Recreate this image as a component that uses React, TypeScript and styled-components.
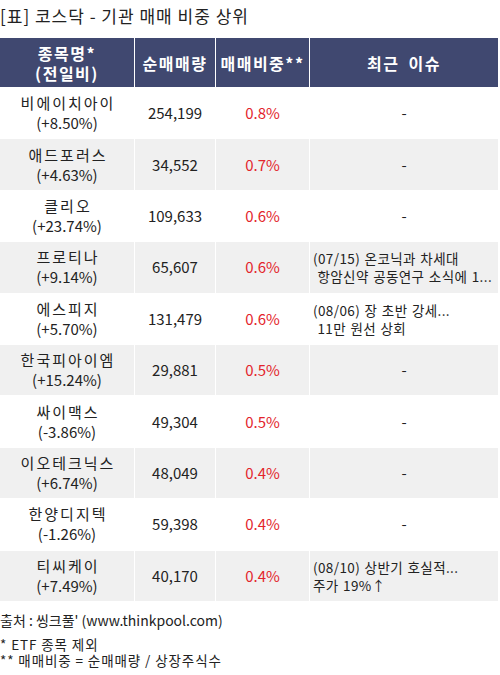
import { styled, createGlobalStyle } from 'styled-components';

interface IRow {
  name: string;
  change: string;
  volume: string;
  ratio: string;
  issue?: string[];
}

const rows: IRow[] = [
  { name: '비에이치아이', change: '(+8.50%)', volume: '254,199', ratio: '0.8%' },
  { name: '애드포러스', change: '(+4.63%)', volume: '34,552', ratio: '0.7%' },
  { name: '클리오', change: '(+23.74%)', volume: '109,633', ratio: '0.6%' },
  {
    name: '프로티나',
    change: '(+9.14%)',
    volume: '65,607',
    ratio: '0.6%',
    issue: ['(07/15) 온코닉과 차세대', ' 항암신약 공동연구 소식에 1...'],
  },
  {
    name: '에스피지',
    change: '(+5.70%)',
    volume: '131,479',
    ratio: '0.6%',
    issue: ['(08/06) 장 초반 강세...', ' 11만 원선 상회'],
  },
  { name: '한국피아이엠', change: '(+15.24%)', volume: '29,881', ratio: '0.5%' },
  { name: '싸이맥스', change: '(-3.86%)', volume: '49,304', ratio: '0.5%' },
  { name: '이오테크닉스', change: '(+6.74%)', volume: '48,049', ratio: '0.4%' },
  { name: '한양디지텍', change: '(-1.26%)', volume: '59,398', ratio: '0.4%' },
  {
    name: '티씨케이',
    change: '(+7.49%)',
    volume: '40,170',
    ratio: '0.4%',
    issue: ['(08/10) 상반기 호실적...', '주가 19%↑'],
  },
];

export default function App() {
  return (
    <Page>
      <GlobalStyle />
      <Title>[표] 코스닥 - 기관 매매 비중 상위</Title>
      <Table>
        <HeadCell>
          <div>
            <div>종목명*</div>
            <div>(전일비)</div>
          </div>
        </HeadCell>
        <HeadCell>순매매량</HeadCell>
        <HeadCell>매매비중**</HeadCell>
        <HeadCell>최근 이슈</HeadCell>
        {rows.map((row, i) => {
          const striped = i % 2 === 1;
          return [
            <Cell key={`n${i}`} $striped={striped}>
              <div>
                <Name>{row.name}</Name>
                <div>{row.change}</div>
              </div>
            </Cell>,
            <Cell key={`v${i}`} $striped={striped}>
              {row.volume}
            </Cell>,
            <Cell key={`r${i}`} $striped={striped}>
              <Ratio>{row.ratio}</Ratio>
            </Cell>,
            row.issue ? (
              <IssueCell key={`s${i}`} $striped={striped}>
                <div>
                  {row.issue.map((line) => (
                    <IssueLine key={line}>{line}</IssueLine>
                  ))}
                </div>
              </IssueCell>
            ) : (
              <Cell key={`s${i}`} $striped={striped}>
                -
              </Cell>
            ),
          ];
        })}
      </Table>
      <Source>출처 : 씽크풀' (www.thinkpool.com)</Source>
      <Notes>
        <div>* ETF 종목 제외</div>
        <div>** 매매비중 = 순매매량 / 상장주식수</div>
      </Notes>
    </Page>
  );
}

const GlobalStyle = createGlobalStyle`
  body {
    margin: 0;
    background: #fff;
    font-family: 'Noto Sans CJK KR', 'Noto Sans', sans-serif;
    color: #222;
  }
`;

const Page = styled.div`
  width: 500px;
  padding-top: 4px;
`;

const Title = styled.div`
  font-size: 17px;
  line-height: 24px;
  letter-spacing: 1px;
  color: #222;
  margin-bottom: 10px;
`;

const Table = styled.div`
  display: grid;
  width: 498px;
  grid-template-columns: 134px 80px 93px 188px;
  grid-template-rows: 49px;
  grid-auto-rows: 50.4px;
  gap: 1px;
`;

const HeadCell = styled.div`
  background: #404870;
  color: #fff;
  font-weight: 700;
  font-size: 16px;
  line-height: 20px;
  letter-spacing: 1.5px;
  word-spacing: 4px;
  display: flex;
  align-items: center;
  justify-content: center;
  text-align: center;
`;

const Cell = styled.div<{ $striped: boolean }>`
  background: ${({ $striped }) => ($striped ? '#f0f0f0' : '#fff')};
  font-size: 15px;
  line-height: 20px;
  display: flex;
  align-items: center;
  justify-content: center;
  text-align: center;
  color: #222;
`;

const Name = styled.div`
  letter-spacing: 2px;
  padding-left: 2px;
`;

const Ratio = styled.span`
  color: #e3242b;
`;

const IssueCell = styled(Cell)`
  justify-content: flex-start;
  text-align: left;
  padding-left: 3px;
  font-size: 13.5px;
  line-height: 18px;
  letter-spacing: 0.4px;
  word-spacing: 1px;
  overflow: hidden;
`;

const IssueLine = styled.div`
  white-space: pre;
`;

const Source = styled.div`
  font-size: 14px;
  line-height: 20px;
  margin-top: 9px;
`;

const Notes = styled.div`
  font-size: 13.5px;
  line-height: 16px;
  letter-spacing: 0.9px;
  margin-top: 6px;
`;
